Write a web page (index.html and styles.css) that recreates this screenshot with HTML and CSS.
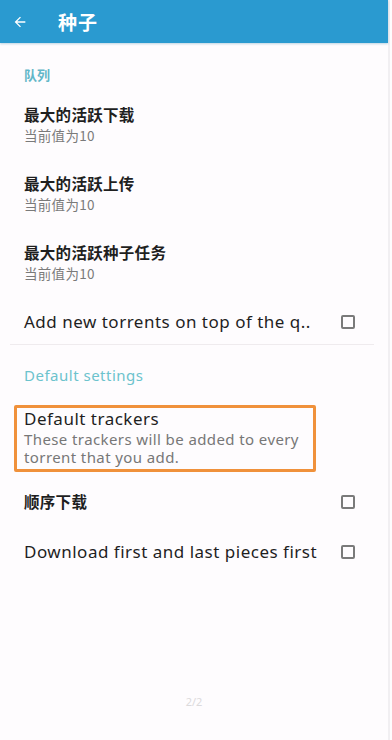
FILE: index.html
```html
<!DOCTYPE html>
<html lang="zh">
<head>
	<meta charset="UTF-8">
	<meta name="viewport" content="width=device-width, initial-scale=1.0">
	<title>种子</title>
	<link rel="stylesheet" href="styles.css">
</head>
<body>
	<div class="page">
		<header class="toolbar">
			<button class="back" aria-label="back">
				<svg width="16" height="16" viewBox="0 0 24 24"><path d="M20 11H7.83l5.59-5.59L12 4l-8 8 8 8 1.41-1.41L7.83 13H20v-2z" fill="#fff"/></svg>
			</button>
			<h1 class="title">种子</h1>
		</header>

		<main class="prefs">
			<div class="category">队列</div>

			<div class="pref cjk">
				<div class="pref-title">最大的活跃下载</div>
				<div class="pref-summary">当前值为10</div>
			</div>
			<div class="pref cjk">
				<div class="pref-title">最大的活跃上传</div>
				<div class="pref-summary">当前值为10</div>
			</div>
			<div class="pref cjk">
				<div class="pref-title">最大的活跃种子任务</div>
				<div class="pref-summary">当前值为10</div>
			</div>

			<div class="pref check first-check">
				<div class="pref-title latin">Add new torrents on top of the q..</div>
				<span class="box"></span>
			</div>

			<hr class="divider">

			<div class="category latin-cat">Default settings</div>

			<div class="pref highlight">
				<div class="pref-title latin">Default trackers</div>
				<div class="pref-summary latin-sum">These trackers will be added to every torrent that you add.</div>
			</div>

			<div class="pref check cjk seq">
				<div class="pref-title">顺序下载</div>
				<span class="box"></span>
			</div>

			<div class="pref check dl-first">
				<div class="pref-title latin">Download first and last pieces first</div>
				<span class="box"></span>
			</div>
		</main>

		<footer class="pager">2/2</footer>
	</div>
</body>
</html>
```

FILE: styles.css
```css
* { box-sizing: border-box; margin: 0; padding: 0; }

html, body {
	height: 100%;
}

body {
	background: #fefcfe;
	font-family: "Noto Sans", "Noto Sans CJK SC", sans-serif;
	color: #1f1f1f;
}

.page {
	position: relative;
	height: 740px;
	border-right: 2px solid #f1eff2;
	width: 390px;
}

.toolbar {
	height: 43px;
	background: #2a9ad0;
	display: flex;
	align-items: center;
	padding-left: 12px;
	gap: 0 30px;
	box-shadow: 0 1px 2px hsla(200, 60%, 40%, 0.3);
}

.back {
	border: none;
	background: none;
	width: 16px;
	height: 16px;
	display: flex;
}

.title {
	color: #fff;
	font-family: "Noto Sans CJK SC", sans-serif;
	font-size: 19px;
	font-weight: 700;
	letter-spacing: 1px;
}

.prefs {
	padding: 0 0 0 24px;
}

.category {
	font-family: "Noto Sans CJK SC", sans-serif;
	font-weight: 700;
	font-size: 13px;
	color: #62b7c8;
	padding-top: 22px;
	line-height: 20px;
}

.pref {
	padding-right: 33px;
}

.cjk .pref-title {
	font-family: "Noto Sans CJK SC", sans-serif;
	font-weight: 700;
	font-size: 15.5px;
	line-height: 21px;
	letter-spacing: 0.3px;
}

.cjk .pref-summary {
	font-family: "Noto Sans CJK SC", sans-serif;
	font-size: 13.5px;
	color: #7a7a7a;
	line-height: 21px;
	letter-spacing: 0.3px;
}

.prefs > .cjk:nth-child(2) { margin-top: 19px; }
.prefs > .cjk:nth-child(3),
.prefs > .cjk:nth-child(4) { margin-top: 27px; }

.check {
	display: flex;
	align-items: center;
	justify-content: space-between;
}

.box {
	width: 14px;
	height: 14px;
	border: 2px solid #7a7a7a;
	border-radius: 2px;
	flex: none;
}

.latin {
	font-size: 17px;
	line-height: 24px;
	letter-spacing: 0.5px;
}

.first-check { margin-top: 26px; }

.divider {
	border: none;
	border-top: 1px solid #efebee;
	margin: 10px 14px 0 -14px;
}

.latin-cat {
	font-family: "Noto Sans", sans-serif;
	font-weight: 400;
	font-size: 15px;
	letter-spacing: 0.5px;
	color: #6cc3cd;
	padding-top: 20px;
}

.highlight {
	margin: 20px 72px 0 -10px;
	padding: 0 8px 5px 7px;
	border: 3px solid #f0913b;
	border-radius: 2px;
	height: 67px;
}

.highlight .pref-title {
	line-height: 22px;
}

.latin-sum {
	font-size: 15px;
	line-height: 18px;
	letter-spacing: 0.4px;
	color: #777;
}

.seq { margin-top: 19px; }

.dl-first { margin-top: 28px; }

.pager {
	position: absolute;
	left: 0;
	right: 0;
	top: 694px;
	text-align: center;
	font-size: 11px;
	color: #dcdadc;
}
```
